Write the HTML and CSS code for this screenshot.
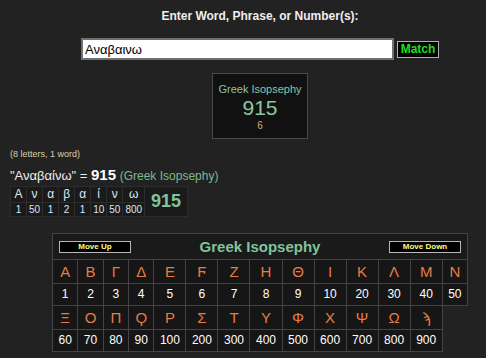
FILE: index.html
```html
<!DOCTYPE html>
<html>
<head>
	<meta charset="utf-8">
	<title>Gematria Calculator</title>
	<link rel="stylesheet" href="styles.css">
</head>
<body>

<div class="search">
	<h1 class="prompt">Enter Word, Phrase, or Number(s):</h1>
	<div class="entry">
		<input class="word-input" type="text" value="Αναβαινω">
		<button class="match-button">Match</button>
	</div>
	<div class="score-box">
		<div class="score-name">Greek Isopsephy</div>
		<div class="score-value">915</div>
		<div class="score-reduced">6</div>
	</div>
</div>

<div class="result">
	<p class="counts">(8 letters, 1 word)</p>
	<p class="equation">"Αναβαίνω" = <b class="equation-total">915</b> <span class="equation-cipher">(Greek Isopsephy)</span></p>
	<table class="breakdown">
		<tbody>
			<tr class="breakdown-letters">
				<td>Α</td><td>ν</td><td>α</td><td>β</td><td>α</td><td>ί</td><td>ν</td><td>ω</td>
				<td rowspan="2" class="breakdown-total">915</td>
			</tr>
			<tr class="breakdown-values">
				<td>1</td><td>50</td><td>1</td><td>2</td><td>1</td><td>10</td><td>50</td><td>800</td>
			</tr>
		</tbody>
	</table>
</div>

<div class="cipher-wrap">
	<table class="cipher">
		<tbody>
			<tr>
				<th colspan="14">
					<div class="cipher-head">
						<button class="move-button">Move Up</button>
						<span class="cipher-title">Greek Isopsephy</span>
						<button class="move-button">Move Down</button>
					</div>
				</th>
			</tr>
			<tr class="cipher-letters">
				<td>Α</td><td>Β</td><td>Γ</td><td>Δ</td><td>Ε</td><td>Ϝ</td><td>Ζ</td><td>Η</td><td>Θ</td><td>Ι</td><td>Κ</td><td>Λ</td><td>Μ</td><td>Ν</td>
			</tr>
			<tr class="cipher-values">
				<td>1</td><td>2</td><td>3</td><td>4</td><td>5</td><td>6</td><td>7</td><td>8</td><td>9</td><td>10</td><td>20</td><td>30</td><td>40</td><td>50</td>
			</tr>
			<tr class="cipher-letters">
				<td>Ξ</td><td>Ο</td><td>Π</td><td>Ϙ</td><td>Ρ</td><td>Σ</td><td>Τ</td><td>Υ</td><td>Φ</td><td>Χ</td><td>Ψ</td><td>Ω</td><td>ϡ</td>
			</tr>
			<tr class="cipher-values">
				<td>60</td><td>70</td><td>80</td><td>90</td><td>100</td><td>200</td><td>300</td><td>400</td><td>500</td><td>600</td><td>700</td><td>800</td><td>900</td>
			</tr>
		</tbody>
	</table>
</div>

</body>
</html>
```

FILE: styles.css
```css
* {
	font-family: "Liberation Sans", Arial, sans-serif;
}

body {
	margin: 0;
	background-color: #222222;
	color: #eeeeee;
}

.search {
	padding-left: 34px;
	display: flex;
	flex-direction: column;
	align-items: center;
}

.prompt {
	margin: 0;
	padding-top: 9px;
	font-size: 12px;
	line-height: 14px;
	font-weight: bold;
	color: #eeeeee;
}

.entry {
	margin-top: 15px;
	display: flex;
	align-items: center;
	gap: 3px;
}

.word-input {
	box-sizing: border-box;
	width: 313px;
	height: 22px;
	padding: 0 2px;
	border: 2px solid #707070;
	outline: 0;
	background-color: white;
	color: black;
	font-size: 13px;
}

.match-button {
	box-sizing: border-box;
	width: 42px;
	height: 17px;
	padding: 0;
	border: 1px solid #b0b0b0;
	background-color: black;
	color: #22dd22;
	font-size: 12px;
	font-weight: bold;
	cursor: pointer;
}

.score-box {
	box-sizing: border-box;
	width: 96px;
	margin-top: 13px;
	padding: 9px 0 6px;
	border: 1px solid #4a4a4a;
	background-color: #111111;
	text-align: center;
}

.score-name {
	font-size: 11px;
	line-height: 13px;
	color: #8cc4a6;
}

.score-value {
	font-size: 21px;
	line-height: 24px;
	color: #8cc6a5;
}

.score-reduced {
	font-size: 10px;
	line-height: 12px;
	color: #c4b57a;
}

.result {
	padding-left: 10px;
}

.counts {
	margin: 10px 0 0;
	font-size: 9px;
	line-height: 11px;
	color: #d8d0a8;
}

.equation {
	margin: 6px 0 0;
	font-size: 13px;
	line-height: 17px;
	color: #eeeeee;
}

.equation-total {
	font-size: 15px;
	line-height: 17px;
	color: white;
}

.equation-cipher {
	font-size: 12px;
	color: #7db88f;
}

.breakdown {
	margin-top: 1px;
	border-collapse: collapse;
}

.breakdown td {
	width: 11px;
	padding: 0 2px;
	border: 1px solid #2c2c2c;
	background-color: #1a1a1a;
	text-align: center;
	color: #dde8f0;
}

.breakdown-letters td {
	height: 15px;
	font-size: 12px;
	line-height: 15px;
}

.breakdown-values td {
	height: 13px;
	font-size: 10px;
	line-height: 13px;
}

.breakdown td.breakdown-total {
	width: auto;
	padding: 0 6px;
	font-size: 18px;
	font-weight: bold;
	color: #80c49c;
}

.cipher-wrap {
	padding-left: 34px;
	margin-top: 16px;
}

.cipher {
	margin: 0 auto;
	border-collapse: collapse;
}

.cipher th {
	height: 25px;
	padding: 0 6px;
	border: 1px solid #444444;
	background-color: #1a1a1a;
}

.cipher-head {
	display: flex;
	justify-content: space-between;
	align-items: center;
}

.move-button {
	box-sizing: border-box;
	width: 72px;
	height: 12px;
	padding: 0;
	border: 1px solid #b8b8b8;
	background-color: black;
	color: #ffff80;
	font-size: 8px;
	line-height: 10px;
	font-weight: bold;
	cursor: pointer;
}

.cipher-title {
	font-size: 15px;
	font-weight: bold;
	color: #7fc49a;
}

.cipher td {
	padding: 0 5.5px;
	border: 1px solid #444444;
	background-color: #161616;
	text-align: center;
}

.cipher-letters td {
	height: 23px;
	font-size: 15px;
	line-height: 23px;
	color: #e57d45;
}

.cipher-values td {
	height: 21px;
	font-size: 12px;
	line-height: 21px;
	color: white;
}
```
